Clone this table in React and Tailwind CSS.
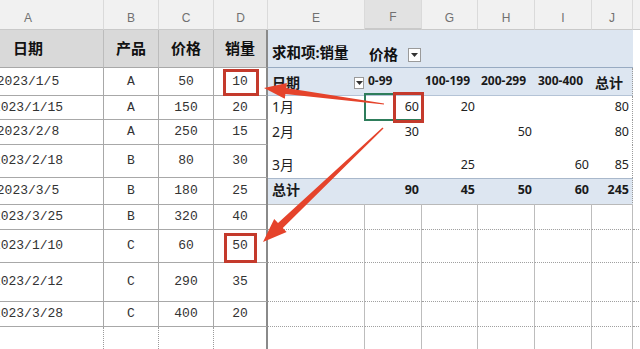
import React from "react";

const COLS =
  "grid grid-cols-[151px_55px_55px_54px_97px_57px_56px_57px_57px_41px_54px]";
const MONO = "font-['Liberation_Mono',monospace]";
const SANS = "font-['Noto_Sans','Noto_Sans_CJK_SC',sans-serif]";

const LC =
  "flex items-center justify-center border-r border-b border-[#a8a8a8] text-[13px] text-[#333] " +
  MONO;
const LD =
  "flex items-center justify-center border-r-2 border-b border-r-[#8a8a8a] border-b-[#a8a8a8] text-[13px] text-[#333] " +
  MONO;
const EMPTY =
  "border-r border-b border-r-[#bdbdbd] border-b-[#a0a0a0] [border-bottom-style:dotted]";
const PV =
  "flex items-end justify-end pr-[3px] pb-[3px] text-[12.5px] text-[#222] " + SANS;

function Drop({ cls }) {
  return (
    <span
      className={
        "flex items-center justify-center bg-white border border-[#9a9a9a] " + cls
      }
    >
      <svg width="7" height="4" viewBox="0 0 7 4">
        <path d="M0 0 L7 0 L3.5 4 Z" fill="#333" />
      </svg>
    </span>
  );
}

const data = [
  { h: "h-[28px]", d: "2023/1/5", p: "A", c: "50", q: "10" },
  { h: "h-[24px]", d: "2023/1/15", p: "A", c: "150", q: "20" },
  { h: "h-[25px]", d: "2023/2/8", p: "A", c: "250", q: "15" },
  { h: "h-[33px]", d: "2023/2/18", p: "B", c: "80", q: "30" },
  { h: "h-[26px]", d: "2023/3/5", p: "B", c: "180", q: "25" },
  { h: "h-[26px]", d: "2023/3/25", p: "B", c: "320", q: "40" },
  { h: "h-[33px]", d: "2023/1/10", p: "C", c: "60", q: "50" },
  { h: "h-[39px]", d: "2023/2/12", p: "C", c: "290", q: "35" },
  { h: "h-[25px]", d: "2023/3/28", p: "C", c: "400", q: "20" },
];

function Left({ r }) {
  return (
    <>
      <div className={LC}>{r.d}</div>
      <div className={LC}>{r.p}</div>
      <div className={LC}>{r.c}</div>
      <div className={LD}>{r.q}</div>
    </>
  );
}

function Right({ i }) {
  const blueHead =
    "bg-[#dde6f1] border-b border-[#b4c3d6] flex items-end pb-[5px] text-[12px] font-bold text-[#1a1a1a] " +
    SANS;
  if (i === 0) {
    return (
      <>
        <div className={blueHead + " justify-between pl-1 pr-[1px] pb-[5px]"}>
          <span className="text-[14px] leading-none">日期</span>
          <Drop cls="w-[10px] h-[12px] mb-[1px]" />
        </div>
        <div className={blueHead + " pl-[3px]"}>0-99</div>
        <div className={blueHead + " pl-[3px]"}>100-199</div>
        <div className={blueHead + " pl-[3px]"}>200-299</div>
        <div className={blueHead + " pl-[3px]"}>300-400</div>
        <div className={blueHead + " pl-[3px] border-r border-r-[#9a9a9a] [border-right-style:dotted]"}>
          <span className="text-[14px] leading-none">总计</span>
        </div>
        <div></div>
      </>
    );
  }
  const pivotRows = {
    1: ["1月", "60", "20", "", "", "80"],
    2: ["2月", "30", "", "50", "", "80"],
    3: ["3月", "", "25", "", "60", "85"],
  };
  if (pivotRows[i]) {
    const v = pivotRows[i];
    return (
      <>
        <div className={"flex items-end pl-1 pb-[3px] text-[14px] text-[#222] " + SANS}>
          {v[0]}
        </div>
        <div className={PV}>{v[1]}</div>
        <div className={PV}>{v[2]}</div>
        <div className={PV}>{v[3]}</div>
        <div className={PV}>{v[4]}</div>
        <div className={PV + " border-r border-r-[#9a9a9a] [border-right-style:dotted]"}>
          {v[5]}
        </div>
        <div></div>
      </>
    );
  }
  if (i === 4) {
    const T =
      "bg-[#dde6f1] border-t border-b border-t-[#a9b8cb] border-b-[#b9b9b9] flex items-end justify-end pr-[3px] pb-[4px] text-[12.5px] font-bold text-[#1a1a1a] " +
      SANS;
    return (
      <>
        <div className={T + " !justify-start pl-1 text-[14px]"}>总计</div>
        <div className={T}>90</div>
        <div className={T}>45</div>
        <div className={T}>50</div>
        <div className={T}>60</div>
        <div className={T + " border-r border-r-[#9a9a9a] [border-right-style:dotted]"}>245</div>
        <div></div>
      </>
    );
  }
  return (
    <>
      <div className={EMPTY}></div>
      <div className={EMPTY}></div>
      <div className={EMPTY}></div>
      <div className={EMPTY}></div>
      <div className={EMPTY}></div>
      <div className={EMPTY}></div>
      <div className={EMPTY}></div>
    </>
  );
}

export default function App() {
  const letters = ["A", "B", "C", "D", "E", "F", "G", "H", "I", "J", ""];
  return (
    <div className="relative w-[640px] h-[349px] overflow-hidden bg-white">
      <div className="-ml-[47px] w-[734px]">
        {/* column letters */}
        <div className={COLS + " h-[30px]"}>
          {letters.map((l, k) => (
            <div
              key={k}
              className={
                "flex items-center justify-center pt-[6px] text-[12px] text-[#707070] border-r border-b border-r-[#dadada] border-b-[#c9c9c9] font-['Liberation_Sans',sans-serif] " +
                (l === "F" ? "bg-[#e2e2e2] border-b-2 border-b-[#217346]" : "bg-[#f1f1f1]")
              }
            >
              {l}
            </div>
          ))}
        </div>
        {/* header row */}
        <div className={COLS + " h-[38px]"}>
          {["日期", "产品", "价格", "销量"].map((t, k) => (
            <div
              key={k}
              className={
                "flex items-center justify-center bg-[#d9d9d9] border-b border-b-[#a8a8a8] text-[15px] font-bold text-[#111] " +
                SANS +
                (k === 3 ? " border-r-2 border-r-[#8a8a8a]" : " border-r border-r-[#bcbcbc]")
              }
            >
              {t}
            </div>
          ))}
          <div
            className={
              "flex items-end pl-1 pb-[3px] bg-[#dde6f1] border-b border-b-[#98abc2] text-[14.5px] font-bold text-[#111] " +
              SANS
            }
          >
            求和项:销量
          </div>
          <div
            className={
              "flex items-end gap-[10px] pl-[4px] pb-[3px] bg-[#dde6f1] border-b border-b-[#98abc2] text-[14.5px] font-bold text-[#111] " +
              SANS
            }
          >
            <span className="leading-[20px]">价格</span>
            <Drop cls="w-[13px] h-[14px] mb-[2px]" />
          </div>
          <div className="bg-[#dde6f1] border-b border-b-[#98abc2]"></div>
          <div className="bg-[#dde6f1] border-b border-b-[#98abc2]"></div>
          <div className="bg-[#dde6f1] border-b border-b-[#98abc2]"></div>
          <div className="bg-[#dde6f1] border-b border-b-[#98abc2]"></div>
          <div></div>
        </div>
        {data.map((r, i) => (
          <div key={i} className={COLS + " " + r.h}>
            <Left r={r} />
            <Right i={i} />
          </div>
        ))}
        <div className={COLS + " h-[30px]"}>
          <div className="border-r border-dotted border-[#9a9a9a]"></div>
          <div className="border-r border-dotted border-[#9a9a9a]"></div>
          <div className="border-r border-dotted border-[#9a9a9a]"></div>
          <div className="border-r-2 border-r-[#8a8a8a]"></div>
          <div className="border-r border-r-[#bdbdbd]"></div>
          <div className="border-r border-r-[#bdbdbd]"></div>
          <div className="border-r border-r-[#bdbdbd]"></div>
          <div className="border-r border-r-[#bdbdbd]"></div>
          <div className="border-r border-r-[#bdbdbd]"></div>
          <div className="border-r border-r-[#bdbdbd]"></div>
          <div></div>
        </div>
      </div>

      {/* selection & annotations */}
      <div className="absolute left-[364px] top-[93px] w-[59px] h-[28px] border-2 border-[#2e7d5b]"></div>
      <div className="absolute left-[393px] top-[92px] w-[31px] h-[31px] border-[3px] border-[#c43a2c]"></div>
      <div className="absolute left-[223px] top-[69px] w-[36px] h-[27px] border-[3px] border-[#c43a2c]"></div>
      <div className="absolute left-[224px] top-[233px] w-[33px] h-[30px] border-[3px] border-[#c43a2c]"></div>
      <svg
        className="absolute left-0 top-0 pointer-events-none"
        width="640"
        height="349"
        viewBox="0 0 640 349"
      >
        <polygon
          points="264,88 286.9,83 286.2,87.9 384.1,103.4 383.9,104.6 285.4,93.9 284.8,98.8"
          fill="#e5432b"
        />
        <polygon
          points="263,242 286.6,232 282.8,228 383.5,128.5 382.5,127.5 278,223 274.2,219"
          fill="#e5432b"
        />
      </svg>
    </div>
  );
}
